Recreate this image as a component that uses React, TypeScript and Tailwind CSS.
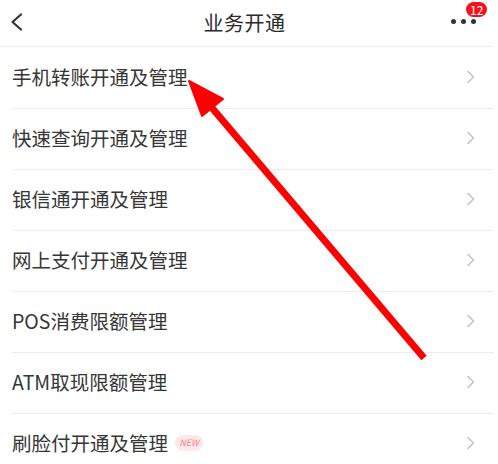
import React from "react";

const items = [
    { label: "手机转账开通及管理" },
    { label: "快速查询开通及管理" },
    { label: "银信通开通及管理" },
    { label: "网上支付开通及管理" },
    { label: "POS消费限额管理" },
    { label: "ATM取现限额管理" },
    { label: "刷脸付开通及管理", isNew: true },
];

function Chevron() {
    return (
        <svg width="10" height="14" viewBox="0 0 10 14" fill="none">
            <path d="M2 1.5 L7.5 7 L2 12.5" stroke="#c4c4c4" strokeWidth="1.6" strokeLinecap="round" strokeLinejoin="round" />
        </svg>
    );
}

export default function App() {
    return (
        <div
            className="relative w-[498px] h-[464px] overflow-hidden bg-white text-[#363636]"
            style={{ fontFamily: '"Noto Sans CJK SC", "Noto Sans", sans-serif' }}
        >
            <div className="w-[493px]">
                <div className="relative h-[47px] border-b border-[#ececec] flex items-center justify-center">
                    <svg className="absolute left-[9px] top-[13px]" width="15" height="18" viewBox="0 0 15 18" fill="none">
                        <path d="M12 1.5 L3.5 9 L12 16.5" stroke="#333" strokeWidth="2.2" strokeLinecap="round" strokeLinejoin="round" />
                    </svg>
                    <span className="text-[20px] text-[#2b2b2b] tracking-[0.5px] ml-[-4px]">业务开通</span>
                    <div className="absolute left-[451px] top-[19px] flex gap-[5px]">
                        <span className="w-[5px] h-[5px] rounded-full bg-[#333]" />
                        <span className="w-[5px] h-[5px] rounded-full bg-[#333]" />
                        <span className="w-[5px] h-[5px] rounded-full bg-[#333]" />
                    </div>
                    <span className="absolute left-[466px] top-[2px] h-[15px] px-[4px] rounded-full bg-[#f5111b] text-white text-[12px] leading-[15px]">
                        12
                    </span>
                </div>

                {items.map((item, i) => (
                    <div key={item.label} className="pl-3">
                        <div className={`h-[61px] flex items-center pr-[17px] pb-[2px] ${i > 0 ? 'border-t border-[#ececec]' : ''}`}>
                            <span className="text-[19.5px] leading-none">{item.label}</span>
                            {
                                item.isNew &&
                                <span className="ml-[7px] h-[16px] w-[28px] rounded-full bg-[#fde9ea] text-[#f3848d] text-[9px] italic flex items-center justify-center">
                                    NEW
                                </span>
                            }
                            <span className="ml-auto flex"><Chevron /></span>
                        </div>
                    </div>
                ))}
            </div>

            <svg className="absolute left-0 top-0" width="498" height="464" viewBox="0 0 498 464">
                <line x1="424" y1="358" x2="207" y2="102" stroke="#ff0000" strokeWidth="7" />
                <polygon points="189,81 202,116 223,99" fill="#ff0000" stroke="#ff0000" strokeWidth="2" strokeLinejoin="round" />
            </svg>
        </div>
    );
}
